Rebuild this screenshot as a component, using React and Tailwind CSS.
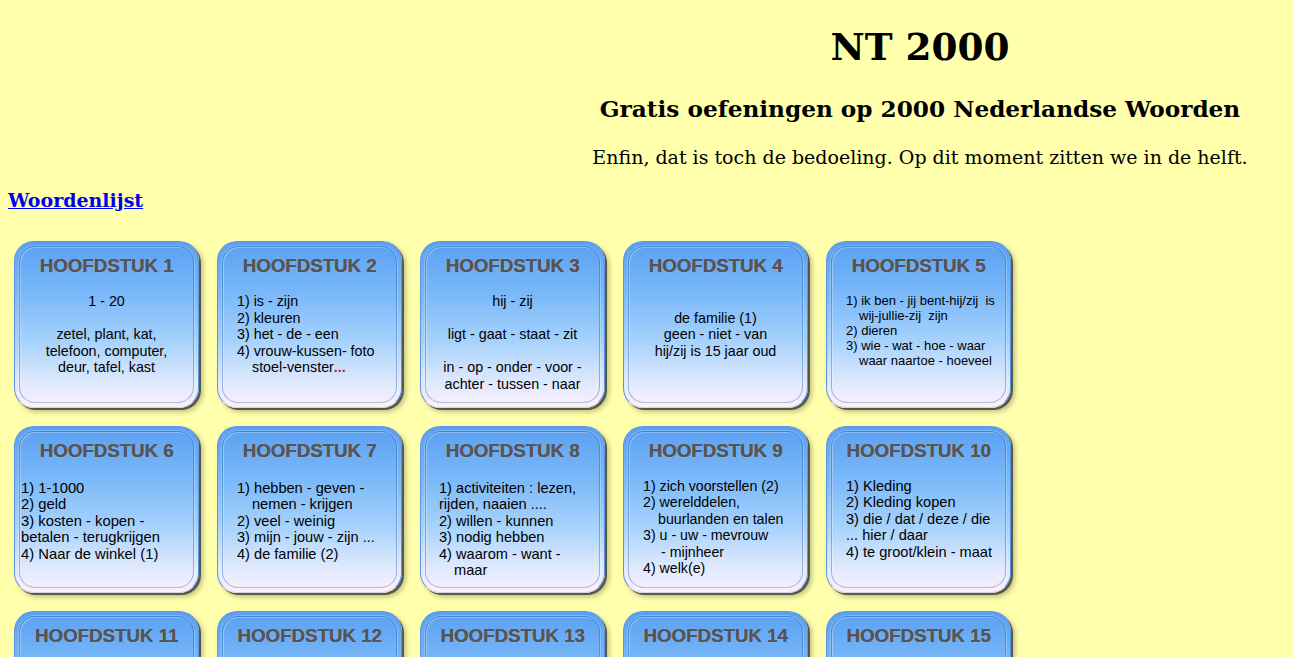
import React from "react";

const cards = [
  { n: 1, align: "center", size: "text-[14.3px]", lead: "leading-[16.5px]", lines: ["1 - 20", "", "zetel, plant, kat,", "telefoon, computer,", "deur, tafel, kast"] },
  { n: 2, align: "left", size: "text-[14.3px]", lead: "leading-[16.5px]", lines: ["1) is - zijn", "2) kleuren", "3) het - de - een", "4) vrouw-kussen- foto", { i: 15, t: "stoel-venster", red: "..." }] },
  { n: 3, align: "center", size: "text-[14.3px]", lead: "leading-[16.5px]", lines: ["hij - zij", "", "ligt - gaat - staat - zit", "", "in - op - onder - voor -", "achter - tussen - naar"] },
  { n: 4, align: "center", size: "text-[14.3px]", lead: "leading-[16.5px]", lines: ["", "de familie (1)", "geen - niet - van", "hij/zij is 15 jaar oud"] },
  { n: 5, align: "left", size: "text-[13px]", lead: "leading-[15px]", lines: ["1) ik ben - jij bent-hij/zij\u00a0 is", { i: 13, t: "wij-jullie-zij\u00a0 zijn" }, "2) dieren", "3) wie - wat - hoe - waar", { i: 13, t: "waar naartoe - hoeveel" }] },
  { n: 6, align: "left", pad: "pl-[6px]", size: "text-[14.8px]", lead: "leading-[16.4px]", mt: "mt-[18px]", lines: ["1) 1-1000", "2) geld", "3) kosten - kopen -", "betalen - terugkrijgen", "4) Naar de winkel (1)"] },
  { n: 7, align: "left", size: "text-[14.6px]", lead: "leading-[16.4px]", mt: "mt-[18px]", lines: ["1) hebben - geven -", { i: 15, t: "nemen - krijgen" }, "2) veel - weinig", "3) mijn - jouw - zijn ...", "4) de familie (2)"] },
  { n: 8, align: "left", pad: "pl-[18px]", size: "text-[14.6px]", lead: "leading-[16.4px]", mt: "mt-[18px]", lines: ["1) activiteiten : lezen,", "rijden, naaien ....", "2) willen - kunnen", "3) nodig hebben", "4) waarom - want -", { i: 15, t: "maar" }] },
  { n: 9, align: "left", size: "text-[14.2px]", lead: "leading-[16.4px]", mt: "mt-[16px]", lines: ["1) zich voorstellen (2)", "2) werelddelen,", { i: 15, t: "buurlanden en talen" }, "3) u - uw - mevrouw", { i: 18, t: "- mijnheer" }, "4) welk(e)"] },
  { n: 10, align: "left", size: "text-[14.6px]", lead: "leading-[16.4px]", mt: "mt-[16px]", lines: ["1) Kleding", "2) Kleding kopen", "3) die / dat / deze / die", "... hier / daar", "4) te groot/klein - maat"] },
  { n: 11, lines: [] },
  { n: 12, lines: [] },
  { n: 13, lines: [] },
  { n: 14, lines: [] },
  { n: 15, lines: [] },
];

function Card({ c }) {
  const alignCls = c.align === "center" ? "text-center" : "text-left";
  const pad = c.align === "center" ? "px-[6px]" : c.pad || "pl-[19px]";
  return (
    <div className="relative w-[185px] h-[167px] rounded-[20px] bg-[linear-gradient(to_bottom,#5aa0f2_0%,#78b7f9_30%,#a6d2fc_60%,#dfe9fd_85%,#fbf0fd_100%)] shadow-[2px_2px_0_0_rgba(50,50,55,0.75),4px_4px_5px_rgba(0,0,0,0.25)] border border-[#5a96e6] border-b-[#d4d4dc]">
      <div className="absolute inset-[4px] rounded-[16px] border border-[rgba(40,90,170,0.4)] border-b-[rgba(120,120,130,0.45)] shadow-[inset_1px_1px_0_rgba(255,255,255,0.3),0_0_0_1px_rgba(255,255,255,0.22)]" />
      <div className="relative" style={{ fontFamily: '"Liberation Sans", Arial, sans-serif' }}>
        <div className="pt-[13px] text-center text-[18.7px] leading-[22px] font-bold text-[#555555] [text-shadow:0.4px_0_0_#555555,0_0_1px_rgba(255,255,255,0.5)]">
          HOOFDSTUK {c.n}
        </div>
        <div className={`${c.mt || "mt-[16px]"} ${alignCls} ${pad} ${c.size || ""} ${c.lead || ""} text-black`}>
          {c.lines.map((l, i) =>
            typeof l === "string" ? (
              <div key={i} className="whitespace-pre">{l === "" ? "\u00a0" : l}</div>
            ) : (
              <div key={i} className="whitespace-pre" style={{ paddingLeft: l.i }}>
                {l.t}
                {l.red && <span className="text-[#e01010] font-bold">{l.red}</span>}
              </div>
            )
          )}
        </div>
      </div>
    </div>
  );
}

export default function App() {
  return (
    <div className="min-h-screen bg-[#ffffac] text-black" style={{ fontFamily: '"DejaVu Serif", serif' }}>
      <div className="pl-[546px] text-center">
        <h1 className="pt-[25px] text-[37.4px] leading-[44px] font-bold">NT 2000</h1>
        <h2 className="mt-[24px] text-[23.2px] leading-[32px] font-bold">Gratis oefeningen op 2000 Nederlandse Woorden</h2>
        <p className="mt-[20px] text-[19px] leading-[24px]">Enfin, dat is toch de bedoeling. Op dit moment zitten we in de helft.</p>
      </div>
      <div className="mt-[19px] pl-[8px] text-[19px] leading-[24px] font-bold">
        <a href="#" className="text-[#0000ee] underline">Woordenlijst</a>
      </div>
      <div className="mt-[29px] pl-[14px] grid grid-cols-[repeat(5,185px)] gap-x-[18px] gap-y-[18px]">
        {cards.map((c) => (
          <Card key={c.n} c={c} />
        ))}
      </div>
    </div>
  );
}
